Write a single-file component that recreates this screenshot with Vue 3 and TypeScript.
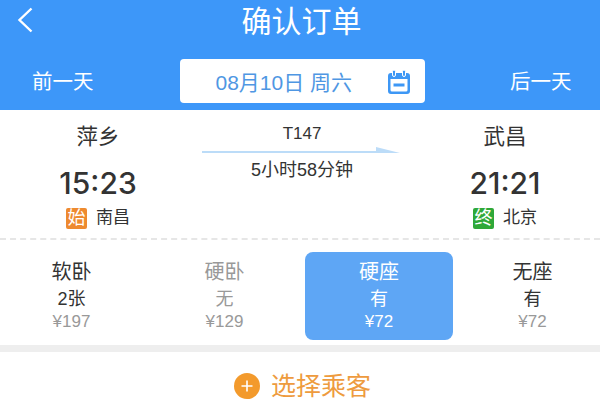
<template>
  <div class="page">
    <header class="header">
      <div class="title-row">
        <svg class="back" width="16" height="26" viewBox="0 0 16 26">
          <path d="M14.5 1.5 L2.5 13 L14.5 24.5" fill="none" stroke="#fff" stroke-width="2.4" />
        </svg>
        <span class="title">确认订单</span>
      </div>
      <div class="date-row">
        <span class="day-link">前一天</span>
        <div class="date-box">
          <span class="date-text">08月10日 周六</span>
          <svg class="cal" width="24" height="26" viewBox="0 0 24 26">
            <path d="M4 4 H20 Q23 4 23 7 V22 Q23 25 20 25 H4 Q1 25 1 22 V7 Q1 4 4 4 Z M3.5 10 V21 Q3.5 22.5 5 22.5 H19 Q20.5 22.5 20.5 21 V10 Z" fill="#3d97f5" fill-rule="evenodd" />
            <rect x="5.5" y="1" width="3" height="6.5" rx="1.5" fill="#3d97f5" stroke="#fff" stroke-width="1" />
            <rect x="15.5" y="1" width="3" height="6.5" rx="1.5" fill="#3d97f5" stroke="#fff" stroke-width="1" />
            <rect x="6.5" y="14.5" width="11" height="3" fill="#3d97f5" />
          </svg>
        </div>
        <span class="day-link">后一天</span>
      </div>
    </header>

    <section class="trip">
      <div class="station">
        <div class="city">萍乡</div>
        <div class="time">15:23</div>
        <div class="via"><span class="tag orange">始</span>南昌</div>
      </div>
      <div class="middle">
        <div class="train-no">T147</div>
        <svg class="arrow" width="198" height="8" viewBox="0 0 198 8">
          <path d="M0 5 H174 V1 L198 7 H0 Z" fill="#bcdcf8" />
        </svg>
        <div class="duration">5小时58分钟</div>
      </div>
      <div class="station">
        <div class="city">武昌</div>
        <div class="time">21:21</div>
        <div class="via"><span class="tag green">终</span>北京</div>
      </div>
    </section>

    <div class="seats">
      <div
        v-for="s in seats"
        :key="s.name"
        class="seat"
        :class="{ active: s.active, off: s.off }"
      >
        <div class="seat-name">{{ s.name }}</div>
        <div class="seat-left">{{ s.left }}</div>
        <div class="seat-price">{{ s.price }}</div>
      </div>
    </div>

    <div class="passenger">
      <span class="plus">
        <svg width="12" height="12" viewBox="0 0 12 12">
          <path d="M6 0.5 V11.5 M0.5 6 H11.5" stroke="#fff" stroke-width="1.6" />
        </svg>
      </span>
      <span class="passenger-text">选择乘客</span>
    </div>
  </div>
</template>

<script setup lang="ts">
const seats = [
  { name: '软卧', left: '2张', price: '¥197' },
  { name: '硬卧', left: '无', price: '¥129', off: true },
  { name: '硬座', left: '有', price: '¥72', active: true },
  { name: '无座', left: '有', price: '¥72' },
];
</script>

<style>
html, body {
  margin: 0;
  background: #fff;
}
</style>

<style scoped>
.page {
  width: 600px;
  height: 400px;
  overflow: hidden;
  font-family: "Liberation Sans", "Noto Sans CJK SC", sans-serif;
  color: #333;
  background: #fff;
}

.header {
  height: 110px;
  background: #3d97f9;
  color: #fff;
}

.title-row {
  position: relative;
  height: 58px;
  display: flex;
  justify-content: center;
  align-items: flex-start;
}

.back {
  position: absolute;
  left: 17px;
  top: 7px;
}

.title {
  font-size: 30px;
  line-height: 40px;
  margin: 2px 0 0 3px;
}

.date-row {
  display: flex;
  align-items: flex-start;
  justify-content: space-between;
  padding: 1px 28px 0 32px;
}

.day-link {
  font-size: 20.5px;
  line-height: 46px;
  width: 62px;
  white-space: nowrap;
}

.date-box {
  width: 245px;
  height: 44px;
  margin-left: 25px;
  margin-right: 25px;
  box-sizing: border-box;
  background: #fff;
  border-radius: 4px;
  display: flex;
  align-items: center;
  padding-left: 36px;
  position: relative;
  color: #4f97e3;
}

.date-text {
  font-size: 21px;
  white-space: nowrap;
}

.cal {
  position: absolute;
  right: 14px;
  top: 10px;
}

.trip {
  display: grid;
  grid-template-columns: 196px 1fr 190px;
  height: 130px;
  border-bottom: 2px dashed #e6e6e6;
  box-sizing: border-box;
}

.station {
  text-align: center;
  padding-top: 12px;
}

.city {
  font-size: 21.5px;
  line-height: 30px;
}

.time {
  font-family: Inter, "Liberation Sans", sans-serif;
  font-size: 30px;
  line-height: 40px;
  margin-top: 11px;
  font-weight: 500;
}

.via {
  font-size: 17px;
  line-height: 22px;
  margin-top: 4px;
  display: flex;
  justify-content: center;
  align-items: center;
}

.tag {
  width: 21px;
  height: 21px;
  border-radius: 2px;
  color: #fff;
  font-size: 18px;
  line-height: 21px;
  margin-right: 9px;
}

.orange {
  background: #ee8a2f;
}

.green {
  background: #2fa838;
}

.middle {
  text-align: center;
  padding: 15px 2px 0 0;
}

.train-no {
  font-size: 17px;
  line-height: 18px;
}

.arrow {
  display: block;
  margin: 3px 0 0 6px;
}

.duration {
  font-size: 18px;
  line-height: 20px;
  margin-top: 6px;
}

.seats {
  display: grid;
  grid-template-columns: 153px 153px 155px 153px;
  margin-left: -5px;
  width: 614px;
  height: 112px;
  padding-top: 12px;
  box-sizing: border-box;
  border-bottom: 7px solid #eeeeee;
}

.seat {
  height: 88px;
  text-align: center;
  border-radius: 8px;
  padding-top: 5px;
  box-sizing: border-box;
}

.seat-name {
  font-size: 20px;
  line-height: 30px;
}

.seat-left {
  font-size: 18px;
  line-height: 24px;
}

.seat-price {
  font-size: 17px;
  line-height: 22px;
  color: #999;
}

.off .seat-name,
.off .seat-left {
  color: #999;
}

.active {
  background: #5ea6f5;
  color: #fff;
  margin: 0 3px 0 4px;
}

.active .seat-price {
  color: #fff;
}

.passenger {
  display: flex;
  justify-content: center;
  align-items: center;
  gap: 11px;
  padding: 19px 0 0 5px;
}

.plus {
  width: 26px;
  height: 26px;
  border-radius: 50%;
  background: #f39a2c;
  display: flex;
  align-items: center;
  justify-content: center;
}

.passenger-text {
  font-size: 25px;
  line-height: 30px;
  color: #ee9b3e;
}
</style>
